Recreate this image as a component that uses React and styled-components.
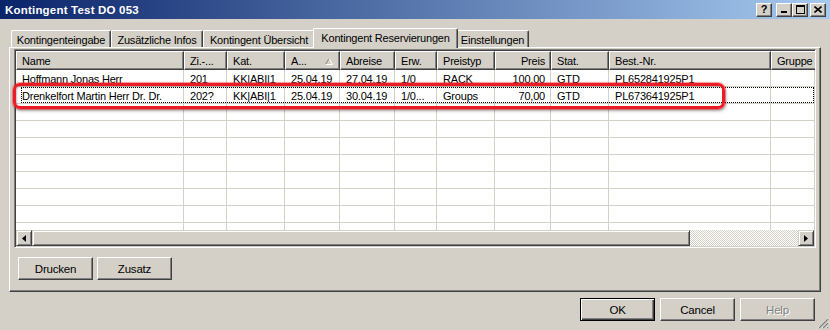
import React from 'react';
import styled, { createGlobalStyle } from 'styled-components';

const GlobalStyle = createGlobalStyle`
  html, body { margin: 0; padding: 0; background: #d4d0c8; }
  body {
    font-family: "Liberation Sans", Arial, sans-serif;
    font-size: 11px;
    letter-spacing: -0.2px;
    color: #000;
  }
  * { box-sizing: border-box; }
`;

const Window = styled.div`
  width: 830px;
  height: 330px;
  background: #d4d0c8;
  position: relative;
  overflow: hidden;
  display: flex;
  flex-direction: column;
`;

const TitleBar = styled.div`
  height: 19px;
  display: flex;
  align-items: center;
  padding: 0 4px 0 5px;
  background: linear-gradient(to right, #0a246a, #a6caf0);
  color: #fff;
  font-weight: bold;
  font-size: 11.5px;
  letter-spacing: 0.2px;
`;

const TitleButtons = styled.div`
  margin-left: auto;
  display: flex;
  align-items: center;
`;

const TitleButton = styled.div`
  width: 16px;
  height: 14px;
  margin-left: ${p => p.$gap || 0}px;
  background: #d4d0c8;
  border: 1px solid;
  border-color: #fff #404040 #404040 #fff;
  box-shadow: inset -1px -1px #808080;
  display: flex;
  align-items: center;
  justify-content: center;
  color: #000;
  font-size: 11px;
  font-weight: bold;
  letter-spacing: 0;
  line-height: 1;
`;

const TabStrip = styled.div`
  margin: 9px 0 0 11px;
  display: flex;
  align-items: flex-end;
  height: 19px;
`;

const Tab = styled.div`
  position: relative;
  z-index: ${p => (p.$active ? 2 : 1)};
  width: ${p => p.$w + (p.$active ? 4 : 0)}px;
  height: ${p => (p.$active ? 20 : 17)}px;
  margin: 0 ${p => (p.$active ? -2 : 0)}px ${p => (p.$active ? -1 : 0)}px;
  padding: ${p => (p.$active ? '0 0 2px' : '1px 0 0')};
  background: #d4d0c8;
  border-top: 1px solid #fff;
  border-left: 1px solid #fff;
  border-right: 1px solid #404040;
  box-shadow: inset -1px 0 #808080;
  border-radius: 2px 2px 0 0;
  display: flex;
  align-items: center;
  justify-content: center;
  white-space: nowrap;
`;

const Panel = styled.div`
  margin: 0 9px;
  height: 245px;
  border: 1px solid;
  border-color: #fff #404040 #404040 #fff;
  box-shadow: inset -1px -1px #808080;
  display: flex;
  flex-direction: column;
`;

const ListFrame = styled.div`
  margin: 1px 0 0 4px;
  width: 802px;
  height: 199px;
  border: 1px solid;
  border-color: #808080 #fff #fff #808080;
  box-shadow: inset 1px 1px #404040, inset -1px -1px #d4d0c8;
  padding: 1px;
  display: flex;
  flex-direction: column;
  overflow: hidden;
`;

const GRID = '168px 43px 58px 55px 55px 42px 58px 56px 58px 162px 60px';

const HeaderRow = styled.div`
  display: grid;
  grid-template-columns: ${GRID};
  height: 19px;
  flex: none;
  width: 815px;
`;

const HeaderCell = styled.div`
  border: 1px solid;
  border-color: #fff #404040 #404040 #fff;
  box-shadow: inset -1px -1px #808080;
  background: #d4d0c8;
  display: flex;
  align-items: center;
  justify-content: ${p => (p.$right ? 'flex-end' : 'flex-start')};
  padding: 1px ${p => (p.$right ? 5 : 0)}px 0 5px;
  white-space: nowrap;
  overflow: hidden;
`;

const SortArrow = styled.svg`
  margin-left: auto;
  margin-right: 6px;
`;

const Body = styled.div`
  flex: 1;
  background: #fff;
  overflow: hidden;
`;

const Row = styled.div`
  position: relative;
  display: grid;
  grid-template-columns: ${GRID};
  height: 17px;
  width: 815px;
  border-bottom: 1px solid #d4d0c8;

  ${p =>
    p.$focused &&
    `&::after {
      content: '';
      position: absolute;
      left: 5px;
      right: 17px;
      top: 0;
      bottom: 0;
      border: 1px dotted #000;
    }`}
`;

const Cell = styled.div`
  border-right: 1px solid #d4d0c8;
  display: flex;
  align-items: center;
  justify-content: ${p => (p.$right ? 'flex-end' : 'flex-start')};
  padding: 2px ${p => (p.$right ? 5 : 4)}px 0 6px;
  white-space: nowrap;
  overflow: hidden;
`;

const HScroll = styled.div`
  height: 16px;
  flex: none;
  display: flex;
`;

const ScrollButton = styled.div`
  width: 16px;
  height: 16px;
  background: #d4d0c8;
  border: 1px solid;
  border-color: #d4d0c8 #404040 #404040 #d4d0c8;
  box-shadow: inset 1px 1px #fff, inset -1px -1px #808080;
  display: flex;
  align-items: center;
  justify-content: center;
`;

const Thumb = styled.div`
  width: ${p => p.$w}px;
  height: 16px;
  background: #d4d0c8;
  border: 1px solid;
  border-color: #d4d0c8 #404040 #404040 #d4d0c8;
  box-shadow: inset 1px 1px #fff, inset -1px -1px #808080;
`;

const Track = styled.div`
  flex: 1;
  background-color: #d4d0c8;
  background-image: conic-gradient(#fff 25%, #d4d0c8 0 50%, #fff 0 75%, #d4d0c8 0);
  background-size: 2px 2px;
`;

const ButtonRow = styled.div`
  display: flex;
  gap: ${p => p.$gap}px;
  margin: ${p => p.$margin};
  justify-content: ${p => p.$justify || 'flex-start'};
`;

const Button = styled.div`
  width: 75px;
  height: 23px;
  background: #d4d0c8;
  border: 1px solid;
  border-color: ${p => (p.$default ? '#000' : '#fff #404040 #404040 #fff')};
  box-shadow: ${p =>
    p.$default
      ? 'inset 1px 1px #fff, inset -1px -1px #404040, inset -2px -2px #808080'
      : 'inset -1px -1px #808080'};
  display: flex;
  align-items: center;
  justify-content: center;
  font-size: 11.5px;
  color: ${p => (p.$disabled ? '#808080' : '#000')};
  text-shadow: ${p => (p.$disabled ? '1px 1px #fff' : 'none')};
  padding-top: 1px;
`;

const Highlight = styled.div`
  position: absolute;
  left: 13px;
  top: 83px;
  width: 712px;
  height: 26px;
  border: 3px solid #ec1c24;
  border-radius: 7px;
  box-shadow: 0 0 1px 1px rgba(236, 28, 36, 0.45), 1px 2px 3px rgba(0, 0, 0, 0.35),
    inset 1px 1px 2px rgba(0, 0, 0, 0.25);
  pointer-events: none;
`;

const Grip = styled.svg`
  position: absolute;
  right: 1px;
  bottom: 1px;
`;

const tabs = [
  { label: 'Kontingenteingabe', w: 100 },
  { label: 'Zusätzliche Infos', w: 92 },
  { label: 'Kontingent Übersicht', w: 112 },
  { label: 'Kontingent Reservierungen', w: 141, active: true },
  { label: 'Einstellungen', w: 73 },
];

const columns = [
  { title: 'Name' },
  { title: 'Zi.-...' },
  { title: 'Kat.' },
  { title: 'A...', sort: true },
  { title: 'Abreise' },
  { title: 'Erw.' },
  { title: 'Preistyp' },
  { title: 'Preis', right: true },
  { title: 'Stat.' },
  { title: 'Best.-Nr.' },
  { title: 'Gruppe' },
];

const rows = [
  ['Hoffmann Jonas Herr', '201', 'KK|ABI|1', '25.04.19', '27.04.19', '1/0', 'RACK', '100,00', 'GTD', 'PL652841925P1', ''],
  ['Drenkelfort Martin Herr Dr. Dr.', '202?', 'KK|ABI|1', '25.04.19', '30.04.19', '1/0...', 'Groups', '70,00', 'GTD', 'PL673641925P1', ''],
];

const emptyRows = Array.from({ length: 8 }, () => Array(11).fill(''));

export default function App() {
  return (
    <Window>
      <GlobalStyle />
      <TitleBar>
        Kontingent Test DO 053
        <TitleButtons>
          <TitleButton>?</TitleButton>
          <TitleButton $gap={4}>
            <svg width="8" height="8" viewBox="0 0 8 8">
              <rect x="1" y="5" width="6" height="2" fill="#000" />
            </svg>
          </TitleButton>
          <TitleButton>
            <svg width="9" height="9" viewBox="0 0 9 9">
              <rect x="0.5" y="0.5" width="8" height="8" fill="none" stroke="#000" />
              <rect x="0" y="0" width="9" height="2" fill="#000" />
            </svg>
          </TitleButton>
          <TitleButton $gap={2}>
            <svg width="8" height="7" viewBox="0 0 8 7">
              <path d="M0.5 0.5 L7.5 6.5 M7.5 0.5 L0.5 6.5" stroke="#000" strokeWidth="1.6" />
            </svg>
          </TitleButton>
        </TitleButtons>
      </TitleBar>

      <TabStrip>
        {tabs.map(t => (
          <Tab key={t.label} $w={t.w} $active={t.active}>
            {t.label}
          </Tab>
        ))}
      </TabStrip>

      <Panel>
        <ListFrame>
          <HeaderRow>
            {columns.map(c => (
              <HeaderCell key={c.title} $right={c.right}>
                {c.title}
                {c.sort && (
                  <SortArrow width="8" height="7" viewBox="0 0 8 7">
                    <path d="M0.5 6.5 L4 0.5" stroke="#808080" />
                    <path d="M4 0.5 L7.5 6.5 L0.5 6.5" stroke="#fff" fill="none" />
                  </SortArrow>
                )}
              </HeaderCell>
            ))}
          </HeaderRow>
          <Body>
            {rows.map((r, i) => (
              <Row key={i} $focused={i === 1}>
                {r.map((v, j) => (
                  <Cell key={j} $right={columns[j].right}>
                    {v}
                  </Cell>
                ))}
              </Row>
            ))}
            {emptyRows.map((r, i) => (
              <Row key={'e' + i}>
                {r.map((v, j) => (
                  <Cell key={j} />
                ))}
              </Row>
            ))}
          </Body>
          <HScroll>
            <ScrollButton>
              <svg width="4" height="7" viewBox="0 0 4 7">
                <path d="M4 0 L0 3.5 L4 7 Z" fill="#000" />
              </svg>
            </ScrollButton>
            <Thumb $w={658} />
            <Track />
            <ScrollButton>
              <svg width="4" height="7" viewBox="0 0 4 7">
                <path d="M0 0 L4 3.5 L0 7 Z" fill="#000" />
              </svg>
            </ScrollButton>
          </HScroll>
        </ListFrame>

        <ButtonRow $gap={4} $margin="9px 0 0 8px">
          <Button>Drucken</Button>
          <Button>Zusatz</Button>
        </ButtonRow>
      </Panel>

      <ButtonRow $gap={5} $margin="6px 15px 0 0" $justify="flex-end">
        <Button $default>OK</Button>
        <Button>Cancel</Button>
        <Button $disabled>Help</Button>
      </ButtonRow>

      <Highlight />

      <Grip width="12" height="12" viewBox="0 0 12 12">
        <path d="M11 1 L1 11 M11 5 L5 11 M11 9 L9 11" stroke="#fff" />
        <path d="M11 2 L2 11 M11 6 L6 11 M11 10 L10 11" stroke="#808080" strokeWidth="1.4" />
      </Grip>
    </Window>
  );
}
